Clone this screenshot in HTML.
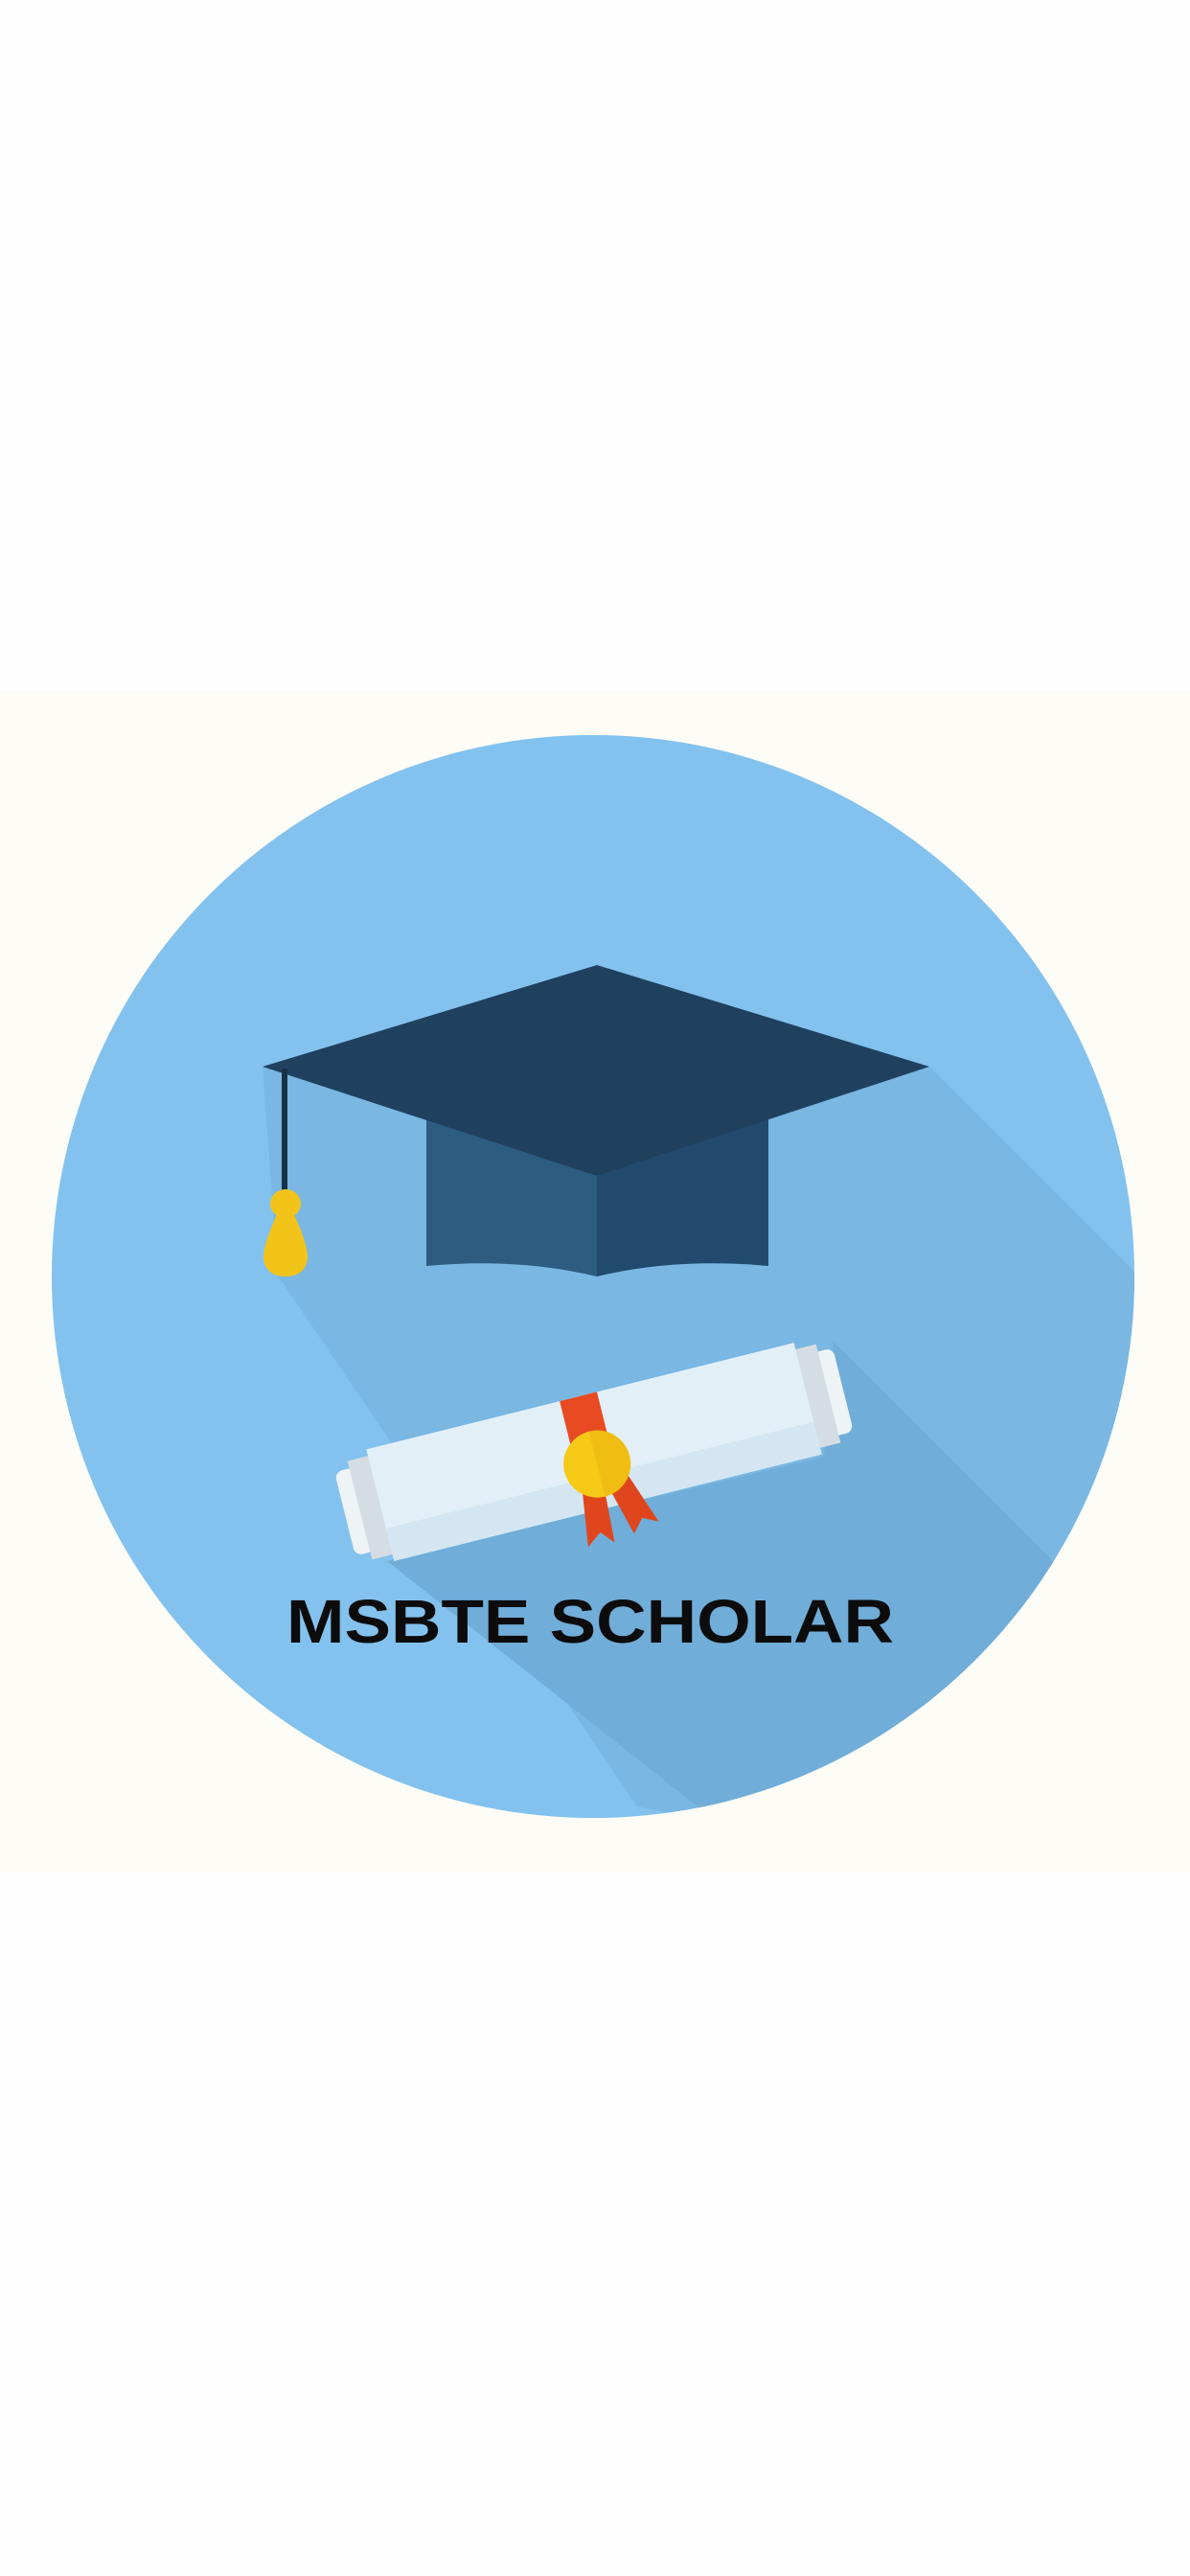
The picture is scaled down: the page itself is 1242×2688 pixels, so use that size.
<!DOCTYPE html>
<html><head><meta charset="utf-8"><style>
html,body{margin:0;padding:0;background:#fefefe;}
body{width:1242px;height:2688px;position:relative;overflow:hidden;}
.band{position:absolute;left:0;top:720px;width:1242px;height:1233px;background:#fdfcf6;}
svg{position:absolute;left:0;top:0;}
</style></head><body>
<div class="band"></div>
<svg width="1242" height="2688" viewBox="0 0 1242 2688">
<defs><clipPath id="c"><circle cx="619" cy="1332" r="565"/></clipPath></defs>
<circle cx="619" cy="1332" r="565" fill="#83c2ee"/>
<g clip-path="url(#c)">
<polygon points="274,1113 970,1113 1570,1713 900,1935 665,1885 290,1331" fill="#7ab7e3"/>
<polygon points="870,1400 1470,2000 1000,2100 404,1629 860,1520" fill="#70add9"/>
</g>
<!-- cap -->
<path d="M445,1160 L623,1227 L623,1332 Q540,1312 445,1321 Z" fill="#2c5c80"/>
<path d="M623,1227 L802,1160 L802,1321 Q705,1312 623,1332 Z" fill="#214a6e"/>
<polygon points="274,1113 623,1007 970,1113 623,1227" fill="#1f415e"/>
<line x1="297" y1="1115" x2="297" y2="1245" stroke="#173247" stroke-width="6"/>
<ellipse cx="298" cy="1256" rx="16" ry="15" fill="#f2c41a"/>
<path d="M290,1265 Q274,1300 275,1314 Q278,1332 298,1332 Q318,1332 321,1314 Q322,1300 306,1265 Z" fill="#f2c41a"/>
<!-- scroll -->
<g transform="rotate(-14 620 1515)">
<rect x="352" y="1470" width="22" height="90" rx="8" fill="#eef3f6"/>
<rect x="368" y="1462" width="24" height="106" fill="#d3dde3"/>
<rect x="866" y="1470" width="22" height="90" rx="8" fill="#eef3f6"/>
<rect x="848" y="1462" width="24" height="106" fill="#d3dde3"/>
<rect x="390" y="1455" width="460" height="120" fill="#e2eff7"/>
<rect x="390" y="1540" width="460" height="35" fill="#d3e6f1"/>
<rect x="598" y="1455" width="40" height="60" fill="#e84a22"/>
<polygon points="600,1540 590,1610 606,1598 618,1612 622,1540" fill="#e0461e"/>
<polygon points="622,1540 640,1608 652,1594 668,1602 646,1540" fill="#e0461e"/>
<circle cx="620" cy="1528" r="35" fill="#f5c916"/>
<path d="M620,1493 A35,35 0 0 1 620,1563 Z" fill="#f0bd12"/>
</g>
<text x="299" y="1714" textLength="634" lengthAdjust="spacingAndGlyphs" font-family="Liberation Sans, sans-serif" font-weight="bold" font-size="64" fill="#0c0c0c">MSBTE SCHOLAR</text>
</svg>
</body></html>
